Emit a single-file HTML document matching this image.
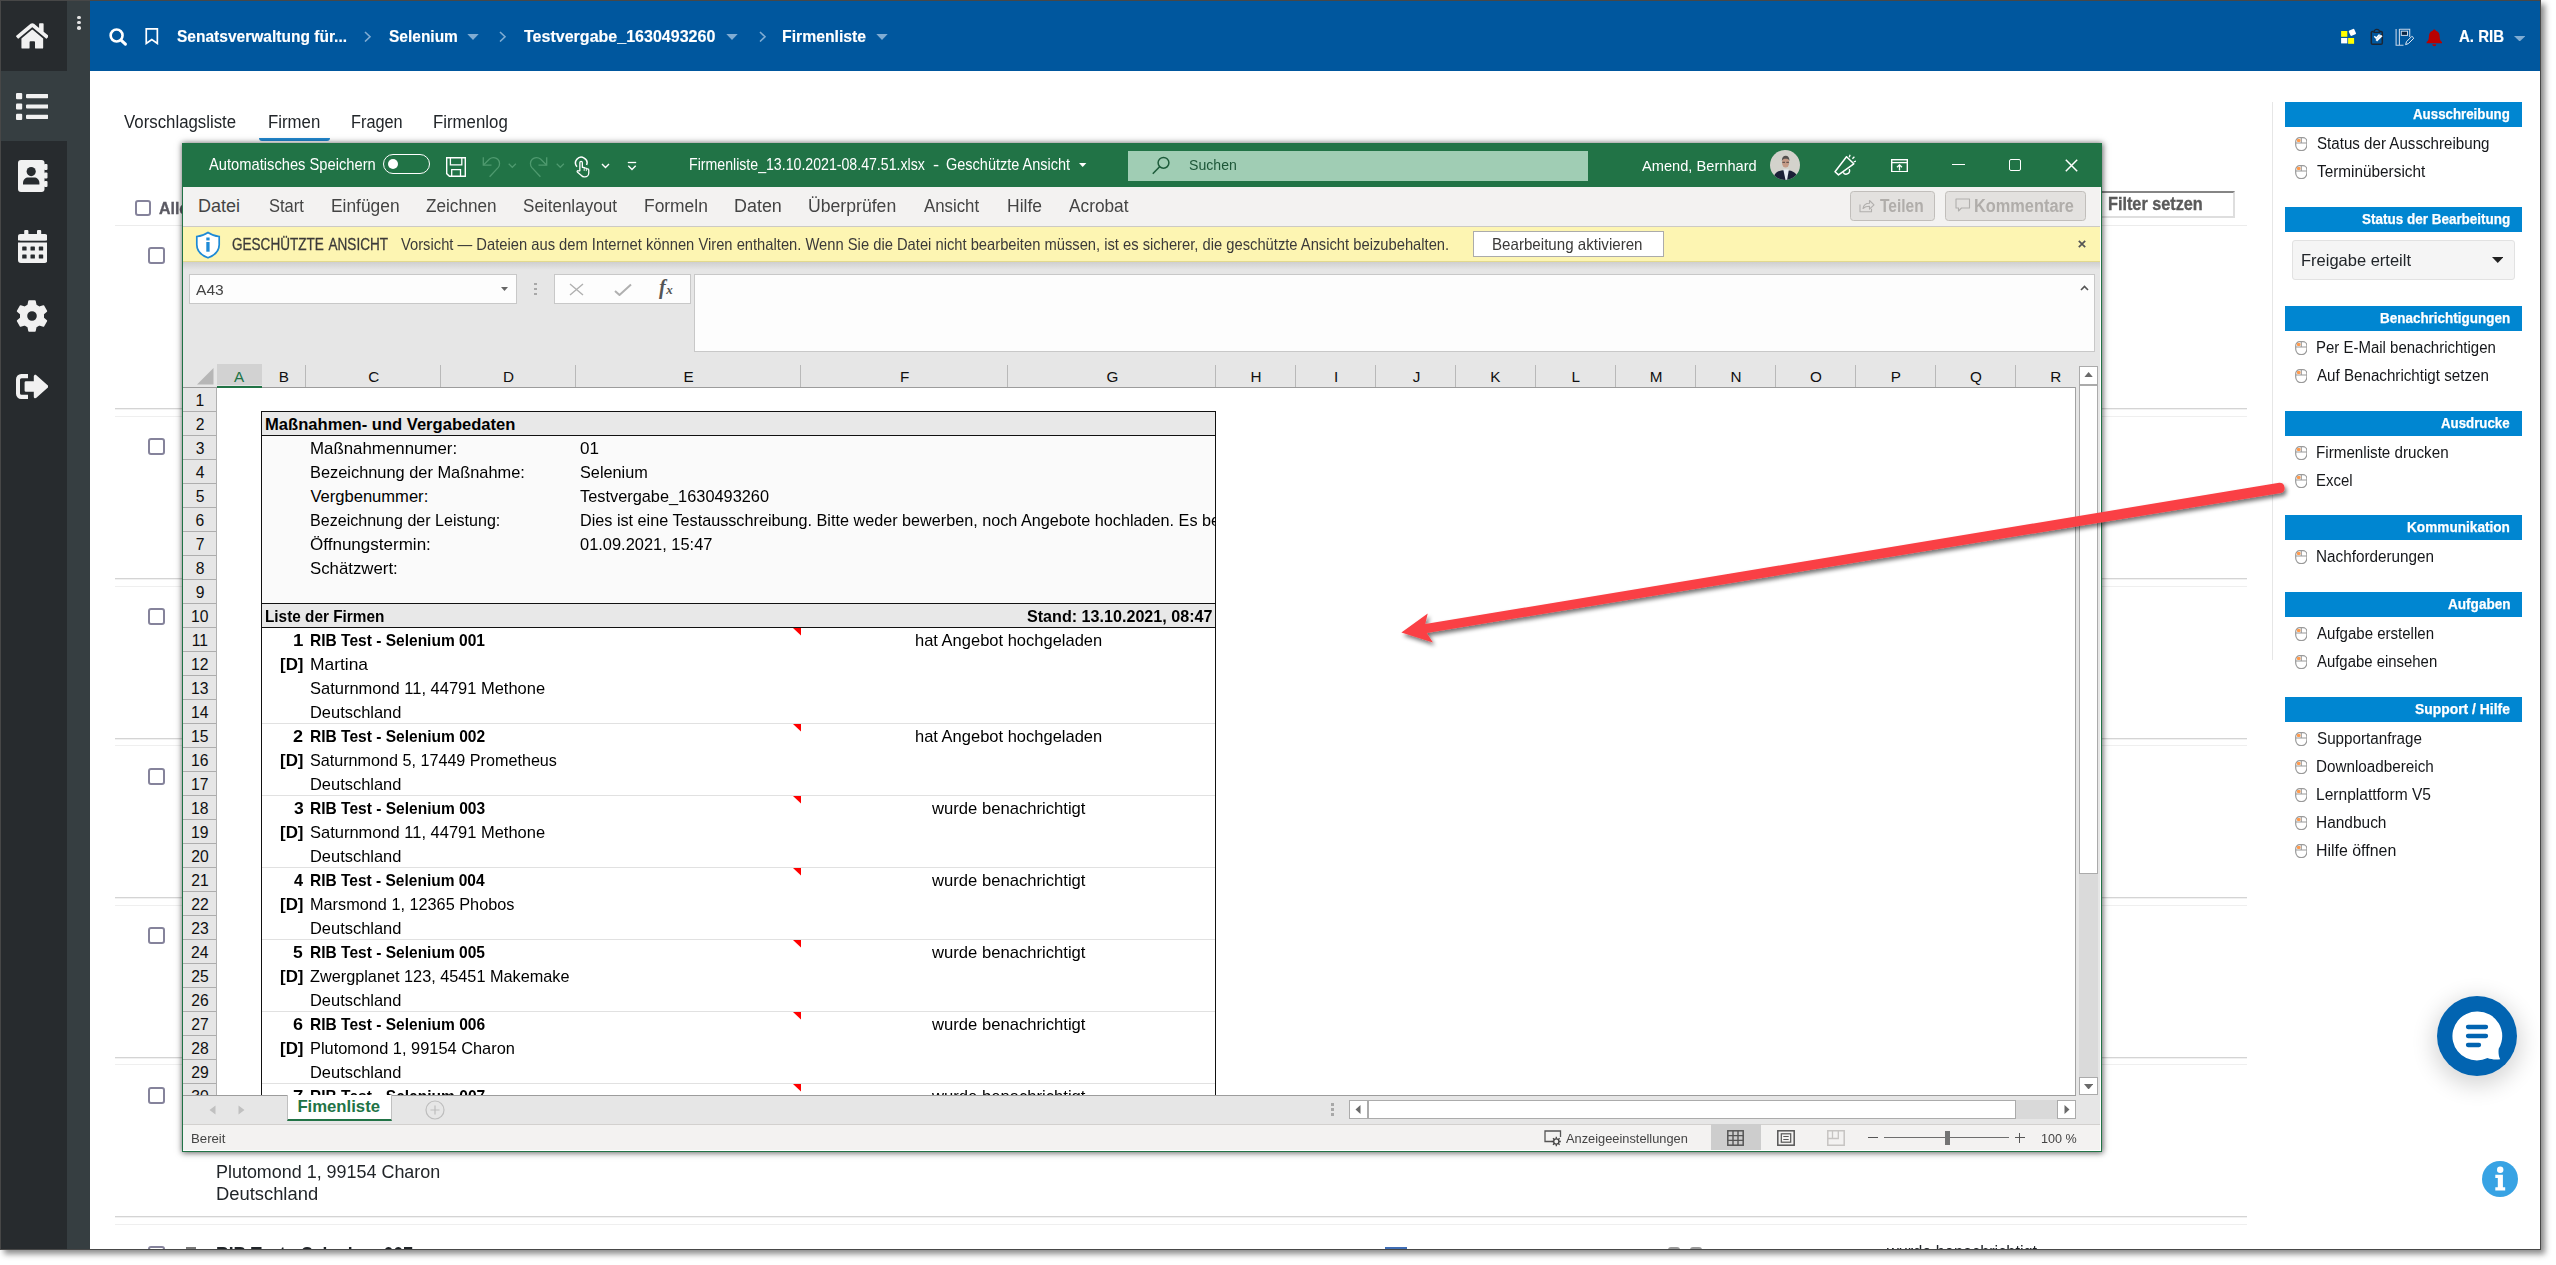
<!DOCTYPE html>
<html lang="de"><head><meta charset="utf-8"><title>Firmenliste</title>
<style>
html,body{margin:0;padding:0;}
body{width:2556px;height:1265px;overflow:hidden;background:#fff;position:relative;font-family:"Liberation Sans",sans-serif;}
#page{position:absolute;left:0;top:0;width:2541px;height:1250px;background:#fff;overflow:hidden;box-shadow:4px 4px 6px rgba(0,0,0,.46);}
#xl{position:absolute;left:182px;top:143px;width:1920px;height:1009px;background:#e6e6e6;overflow:hidden;box-shadow:0 0 6px .5px rgba(0,0,0,.62);}
.a{position:absolute;display:block;}
.t{position:absolute;white-space:nowrap;line-height:1;transform-origin:0 0;display:block;}
i.b{display:inline-block;width:0;height:0;vertical-align:baseline;}

</style></head>
<body>
<div id="page">
<div class="a" style="left:0px;top:0px;width:67px;height:1250px;background:#272b2e;"></div>
<div class="a" style="left:0px;top:71px;width:67px;height:70px;background:#363e41;"></div>
<div class="a" style="left:67px;top:0px;width:23px;height:1250px;background:#363e41;"></div>
<div class="a" style="left:90px;top:0px;width:2451px;height:71px;background:#00579e;"></div>
<svg class="a" style="left:15.8px;top:23.4px;" width="32.6" height="25.8" viewBox="0 30 576 452"><path fill="#f1f1f1" d="M280.37 148.26L96 300.11V464a16 16 0 0 0 16 16l112.06-.29a16 16 0 0 0 15.92-16V368a16 16 0 0 1 16-16h64a16 16 0 0 1 16 16v95.64a16 16 0 0 0 16 16.05L464 480a16 16 0 0 0 16-16V300L295.67 148.26a12.19 12.19 0 0 0-15.3 0zM571.6 251.47L488 182.56V44.05a12 12 0 0 0-12-12h-56a12 12 0 0 0-12 12v72.61L318.47 43a48 48 0 0 0-61 0L4.34 251.47a12 12 0 0 0-1.6 16.9l25.5 31A12 12 0 0 0 45.15 301l235.22-193.74a12.19 12.19 0 0 1 15.3 0L530.9 301a12 12 0 0 0 16.9-1.6l25.5-31a12 12 0 0 0-1.7-16.93z"/></svg>
<div class="a" style="left:77px;top:15.599999999999998px;width:3.6px;height:3.6px;background:#e4e4e4;border-radius:50%;"></div>
<div class="a" style="left:77px;top:20.9px;width:3.6px;height:3.6px;background:#e4e4e4;border-radius:50%;"></div>
<div class="a" style="left:77px;top:26.2px;width:3.6px;height:3.6px;background:#e4e4e4;border-radius:50%;"></div>
<svg class="a" style="left:15.8px;top:92.8px;" width="32.4" height="27" viewBox="0 0 32.4 27"><g fill="#f1f1f1"><rect x="0" y="0" width="6.2" height="6.2" rx="1"/><rect x="0" y="10.4" width="6.2" height="6.2" rx="1"/><rect x="0" y="20.8" width="6.2" height="6.2" rx="1"/><rect x="10" y="1" width="22.4" height="4.2" rx="1"/><rect x="10" y="11.4" width="22.4" height="4.2" rx="1"/><rect x="10" y="21.8" width="22.4" height="4.2" rx="1"/></g></svg>
<svg class="a" style="left:17.6px;top:160px;" width="30" height="32" viewBox="0 0 30 32"><g fill="#f1f1f1"><rect x="0" y="0" width="26.5" height="32" rx="3"/><rect x="26" y="4" width="3.5" height="6" rx="1"/><rect x="26" y="12.5" width="3.5" height="6" rx="1"/><rect x="26" y="21" width="3.5" height="6" rx="1"/></g><g fill="#272b2e"><circle cx="13.2" cy="11.6" r="4.6"/><path d="M5 23.2c0-3.6 2.6-5.6 5.2-5.6h6c2.6 0 5.2 2 5.2 5.6v1.3H5z"/></g></svg>
<svg class="a" style="left:17.6px;top:229.5px;" width="29.4" height="33" viewBox="0 0 29.4 33"><g fill="#f1f1f1"><rect x="0" y="4" width="29.4" height="6.4" rx="2.5"/><rect x="0" y="7" width="29.4" height="3.4"/><rect x="6.2" y="0" width="4.2" height="7" rx="1"/><rect x="19" y="0" width="4.2" height="7" rx="1"/><path d="M0 12.4h29.4v17.6a3 3 0 0 1-3 3H3a3 3 0 0 1-3-3z"/></g><g fill="#272b2e"><rect x="4.2" y="16.4" width="4.4" height="4.2" rx=".6"/><rect x="12.5" y="16.4" width="4.4" height="4.2" rx=".6"/><rect x="20.8" y="16.4" width="4.4" height="4.2" rx=".6"/><rect x="4.2" y="24.4" width="4.4" height="4.2" rx=".6"/><rect x="12.5" y="24.4" width="4.4" height="4.2" rx=".6"/><rect x="20.8" y="24.4" width="4.4" height="4.2" rx=".6"/></g></svg>
<svg class="a" style="left:16px;top:300px;" width="32" height="32" viewBox="0 0 32 32"><path fill="#f1f1f1" fill-rule="evenodd" stroke="#f1f1f1" stroke-width="1.6" stroke-linejoin="round" d="M12.22 5.25 L13.04 1.09 L18.96 1.09 L19.78 5.25 L23.42 7.35 L27.43 5.98 L30.39 11.11 L27.20 13.90 L27.20 18.10 L30.39 20.89 L27.43 26.02 L23.42 24.65 L19.78 26.75 L18.96 30.91 L13.04 30.91 L12.22 26.75 L8.58 24.65 L4.57 26.02 L1.61 20.89 L4.80 18.10 L4.80 13.90 L1.61 11.11 L4.57 5.98 L8.58 7.35Z M10.40 16.00a5.6 5.6 0 1 0 11.2 0a5.6 5.6 0 1 0 -11.2 0Z"/></svg>
<svg class="a" style="left:15.8px;top:373.8px;" width="32.4" height="25" viewBox="0 0 32.4 25"><g fill="#f1f1f1"><path d="M12 0v4.2H5.6a1.6 1.6 0 0 0-1.6 1.6v13.4a1.6 1.6 0 0 0 1.6 1.6H12V25H5.2A5.2 5.2 0 0 1 0 19.8V5.2A5.2 5.2 0 0 1 5.2 0z"/><path d="M20.4 1.2c-1-1-2.6-.3-2.6 1.1v4.9H10a1.4 1.4 0 0 0-1.4 1.4v7.8A1.4 1.4 0 0 0 10 17.8h7.8v4.9c0 1.4 1.6 2.100 2.6 1.1l11.500-10.200c.6-.6.6-1.600 0-2.200z"/></g></svg>
<svg class="a" style="left:108.5px;top:27.5px;" width="19" height="19" viewBox="0 0 19 19"><circle cx="7.600" cy="7.500" r="5.950" fill="none" stroke="#fff" stroke-width="2.600"/><path d="M12.300 12.300l4.100 3.900" stroke="#fff" stroke-width="3.100" stroke-linecap="round"/></svg>
<svg class="a" style="left:144.6px;top:27.9px;" width="14" height="17.5" viewBox="0 0 14 17.5"><path d="M1.250 .850h11.100v14.600L6.800 11.500 1.250 15.450z" fill="none" stroke="#fff" stroke-width="1.700" stroke-linejoin="miter"/></svg>
<span class="t" style="font-size:16.72px;color:#fff;font-weight:700;transform:scaleX(0.9298);left:177.05px;top:29.00px;-webkit-text-stroke:.15px;">Senatsverwaltung für...</span>
<span class="t" style="font-size:16.72px;color:#fff;font-weight:700;transform:scaleX(0.9279);left:388.55px;top:29.00px;-webkit-text-stroke:.15px;">Selenium</span>
<span class="t" style="font-size:16.72px;color:#fff;font-weight:700;transform:scaleX(0.9598);left:524.32px;top:29.00px;-webkit-text-stroke:.15px;">Testvergabe_1630493260</span>
<span class="t" style="font-size:16.72px;color:#fff;font-weight:700;transform:scaleX(0.9436);left:781.94px;top:29.00px;-webkit-text-stroke:.15px;">Firmenliste</span>
<svg class="a" style="left:362.8px;top:30.5px;" width="9" height="11.5" viewBox="0 0 9 11.5"><path d="M2 1l5 4.750L2 10.500" fill="none" stroke="#7facd3" stroke-width="1.6"/></svg>
<svg class="a" style="left:498.0px;top:30.5px;" width="9" height="11.5" viewBox="0 0 9 11.5"><path d="M2 1l5 4.750L2 10.500" fill="none" stroke="#7facd3" stroke-width="1.6"/></svg>
<svg class="a" style="left:758.2px;top:30.5px;" width="9" height="11.5" viewBox="0 0 9 11.5"><path d="M2 1l5 4.750L2 10.500" fill="none" stroke="#7facd3" stroke-width="1.6"/></svg>
<svg class="a" style="left:467px;top:34.3px;" width="12" height="6.2" viewBox="0 0 12 6.2"><path d="M0.3 0h11.400L6 6z" fill="#7facd3"/></svg>
<svg class="a" style="left:725.5px;top:34.3px;" width="12" height="6.2" viewBox="0 0 12 6.2"><path d="M0.3 0h11.400L6 6z" fill="#7facd3"/></svg>
<svg class="a" style="left:875.5px;top:34.3px;" width="12" height="6.2" viewBox="0 0 12 6.2"><path d="M0.3 0h11.400L6 6z" fill="#7facd3"/></svg>
<svg class="a" style="left:2340px;top:28px;" width="18" height="17" viewBox="0 0 18 17"><rect x="1.100" y="3" width="6.200" height="5.800" fill="#ffff00"/><rect x="1.100" y="10" width="6.200" height="5.400" fill="#fff"/><rect x="8.100" y="10" width="6" height="5.800" fill="#ffff00"/><rect x="9.400" y="1.500" width="6" height="5.800" rx="1" fill="#fff" transform="rotate(-24 12.400 4.400)"/></svg>
<svg class="a" style="left:2370px;top:28px;" width="15" height="18" viewBox="0 0 15 18"><path d="M3.700 3.400H2.600a1.300 1.300 0 0 0-1.300 1.300v10.300a1.300 1.300 0 0 0 1.300 1.300h8.400a1.300 1.300 0 0 0 1.300-1.300V4.700a1.300 1.300 0 0 0-1.300-1.300H9.900" fill="none" stroke="#1b2634" stroke-width="1.500"/><path d="M4 4.300c0-2 1.200-2.900 2.800-2.900s2.800.9 2.800 2.900z" fill="none" stroke="#1b2634" stroke-width="1.300"/><path d="M4.300 8.300l1.900 1.900 3.400-3.600" fill="none" stroke="#fff" stroke-width="1.600"/><path d="M6.300 12.800l5.600-5.600" stroke="#fff" stroke-width="2.300"/><path d="M11.300 6.200l1.500 1.500" stroke="#1b2634" stroke-width="1.200"/></svg>
<svg class="a" style="left:2395px;top:28px;" width="19" height="19" viewBox="0 0 19 19"><path d="M1.100 1v16.700M4.400 1v16.700M1.100 17.300h7.400M4.400 1.300h10.300v7.600" fill="none" stroke="#c3d4e6" stroke-width="1.100"/><rect x="6.300" y="3.200" width="6.200" height="4.200" fill="#0b2746" stroke="#c9d9ea" stroke-width="1"/><path d="M10.600 16.600l.9-2.900 5.400-5.400 1.900 1.900-5.400 5.400z" fill="none" stroke="#e3ecf5" stroke-width="1"/></svg>
<svg class="a" style="left:2425.5px;top:28.6px;" width="17" height="18" viewBox="0 0 17 18"><path d="M8.300 0.400c.9 0 1.500.600 1.500 1.400 2.600.700 3.900 2.900 3.900 5.600 0 3.300 1 4.600 2.300 5.700v1.200H.6v-1.200C1.900 12 2.900 10.700 2.900 7.400c0-2.700 1.300-4.900 3.900-5.600 0-.8.600-1.400 1.500-1.400z" fill="#b80000"/><path d="M6.300 15.300h4a2 2 0 0 1-4 0z" fill="#b80000"/></svg>
<span class="t" style="font-size:16.72px;color:#fff;font-weight:700;transform:scaleX(0.8989);left:2459.03px;top:29.00px;-webkit-text-stroke:.15px;">A. RIB</span>
<svg class="a" style="left:2514px;top:35.5px;" width="11.4" height="5.5" viewBox="0 0 11.4 5.5"><path d="M0 0h11.400L5.700 5.500z" fill="#7facd3"/></svg>
<span class="t" style="font-size:18.53px;color:#212529;transform:scaleX(0.9079);left:124.43px;top:113.02px;">Vorschlagsliste</span>
<span class="t" style="font-size:18.53px;color:#212529;transform:scaleX(0.9073);left:267.62px;top:113.02px;">Firmen</span>
<span class="t" style="font-size:18.53px;color:#212529;transform:scaleX(0.8812);left:350.66px;top:113.02px;">Fragen</span>
<span class="t" style="font-size:18.53px;color:#212529;transform:scaleX(0.9081);left:433.12px;top:113.02px;">Firmenlog</span>
<div class="a" style="left:259px;top:138.4px;width:70.5px;height:3px;background:#2186cd;border-radius:0 0 3px 3px;"></div>
<div class="a" style="left:135px;top:200px;width:16px;height:16px;background:#fff;border:2px solid #85839b;border-radius:3px;box-sizing:border-box;"></div>
<span class="t" style="font-size:17.15px;color:#5b5a63;font-weight:700;transform:scaleX(0.9302);left:159.00px;top:200.01px;-webkit-text-stroke:.35px;">Alle</span>
<div class="a" style="left:2080px;top:191px;width:155px;height:27px;background:#fff;box-sizing:border-box;border:2px solid;border-color:#858585 #dedede #dedede #858585;"></div>
<span class="t" style="font-size:17.44px;color:#5a5a5a;font-weight:700;transform:scaleX(0.9316);left:2108.21px;top:196.00px;-webkit-text-stroke:.35px;">Filter setzen</span>
<div class="a" style="left:115px;top:225px;width:2132px;height:1px;background:#ececec;"></div>
<div class="a" style="left:115px;top:408px;width:2132px;height:1px;background:#d4d4d4;"></div>
<div class="a" style="left:115px;top:409px;width:2132px;height:1px;background:#f1f1f1;"></div>
<div class="a" style="left:115px;top:416px;width:2132px;height:1px;background:#efefef;"></div>
<div class="a" style="left:115px;top:578px;width:2132px;height:1px;background:#d4d4d4;"></div>
<div class="a" style="left:115px;top:579px;width:2132px;height:1px;background:#f1f1f1;"></div>
<div class="a" style="left:115px;top:586px;width:2132px;height:1px;background:#efefef;"></div>
<div class="a" style="left:115px;top:738px;width:2132px;height:1px;background:#d4d4d4;"></div>
<div class="a" style="left:115px;top:739px;width:2132px;height:1px;background:#f1f1f1;"></div>
<div class="a" style="left:115px;top:745px;width:2132px;height:1px;background:#efefef;"></div>
<div class="a" style="left:115px;top:897px;width:2132px;height:1px;background:#d4d4d4;"></div>
<div class="a" style="left:115px;top:898px;width:2132px;height:1px;background:#f1f1f1;"></div>
<div class="a" style="left:115px;top:905px;width:2132px;height:1px;background:#efefef;"></div>
<div class="a" style="left:115px;top:1057px;width:2132px;height:1px;background:#d4d4d4;"></div>
<div class="a" style="left:115px;top:1058px;width:2132px;height:1px;background:#f1f1f1;"></div>
<div class="a" style="left:115px;top:1064px;width:2132px;height:1px;background:#efefef;"></div>
<div class="a" style="left:115px;top:1216px;width:2132px;height:1px;background:#d4d4d4;"></div>
<div class="a" style="left:115px;top:1217px;width:2132px;height:1px;background:#f1f1f1;"></div>
<div class="a" style="left:115px;top:1224px;width:2132px;height:1px;background:#efefef;"></div>
<div class="a" style="left:148px;top:247px;width:17px;height:17px;background:#fff;border:2px solid #85839b;border-radius:3px;box-sizing:border-box;"></div>
<div class="a" style="left:148px;top:438.3px;width:17px;height:17px;background:#fff;border:2px solid #85839b;border-radius:3px;box-sizing:border-box;"></div>
<div class="a" style="left:148px;top:608.4px;width:17px;height:17px;background:#fff;border:2px solid #85839b;border-radius:3px;box-sizing:border-box;"></div>
<div class="a" style="left:148px;top:768.2px;width:17px;height:17px;background:#fff;border:2px solid #85839b;border-radius:3px;box-sizing:border-box;"></div>
<div class="a" style="left:148px;top:927.4px;width:17px;height:17px;background:#fff;border:2px solid #85839b;border-radius:3px;box-sizing:border-box;"></div>
<div class="a" style="left:148px;top:1087.2px;width:17px;height:17px;background:#fff;border:2px solid #85839b;border-radius:3px;box-sizing:border-box;"></div>
<div class="a" style="left:148px;top:1246.3px;width:17px;height:17px;background:#fff;border:2px solid #85839b;border-radius:3px;box-sizing:border-box;"></div>
<span class="t" style="font-size:18.9px;color:#212529;transform:scaleX(0.9489);left:215.73px;top:1163.00px;">Plutomond 1, 99154 Charon</span>
<span class="t" style="font-size:18.9px;color:#212529;transform:scaleX(0.9722);left:215.69px;top:1185.00px;">Deutschland</span>
<span class="t" style="font-size:18.9px;color:#212529;font-weight:700;transform:scaleX(0.9256);left:216.03px;top:1245.00px;">RIB Test - Selenium 007</span>
<span class="t" style="font-size:18.9px;color:#212529;transform:scaleX(0.8610);left:1886.62px;top:1243.00px;">wurde benachrichtigt</span>
<div class="a" style="left:186px;top:1247px;width:10px;height:4px;background:#777;"></div>
<div class="a" style="left:1385px;top:1247px;width:22px;height:4px;background:#3f6db5;"></div>
<div class="a" style="left:1668px;top:1247px;width:12px;height:3px;background:#999;border-radius:3px 3px 0 0;"></div>
<div class="a" style="left:1690px;top:1247px;width:12px;height:3px;background:#999;border-radius:3px 3px 0 0;"></div>
<div class="a" style="left:2272px;top:102px;width:1px;height:558px;background:#e6e6e6;"></div>
<div class="a" style="left:2285px;top:102px;width:237px;height:25px;background:#0086d1;"></div>
<span class="t" style="font-size:14.53px;color:#fff;font-weight:700;transform:scaleX(0.9163);left:2413.37px;top:107.01px;-webkit-text-stroke:.25px;">Ausschreibung</span>
<svg class="a" style="left:2294.7px;top:137px;" width="12.6" height="14.4" viewBox="0 0 12.6 14.4"><path d="M0.700 4.700A4 4 0 0 1 4.700 0.700H7.900A4 4 0 0 1 11.900 4.700V8.100A5.600 5.600 0 0 1 0.700 8.100Z" fill="#fff" stroke="#9a9a9a" stroke-width="1.200"/><path d="M0.700 6H11.900M6.300 0.700V6" stroke="#9a9a9a" stroke-width="1.100" fill="none"/><rect x="1.900" y="2" width="3.600" height="3.100" rx="1.100" fill="#ff9a4d"/></svg>
<span class="t" style="font-size:15.84px;color:#15171a;transform:scaleX(0.9561);left:2316.51px;top:136.32px;">Status der Ausschreibung</span>
<svg class="a" style="left:2294.7px;top:165px;" width="12.6" height="14.4" viewBox="0 0 12.6 14.4"><path d="M0.700 4.700A4 4 0 0 1 4.700 0.700H7.900A4 4 0 0 1 11.900 4.700V8.100A5.600 5.600 0 0 1 0.700 8.100Z" fill="#fff" stroke="#9a9a9a" stroke-width="1.200"/><path d="M0.700 6H11.900M6.300 0.700V6" stroke="#9a9a9a" stroke-width="1.100" fill="none"/><rect x="1.900" y="2" width="3.600" height="3.100" rx="1.100" fill="#ff9a4d"/></svg>
<span class="t" style="font-size:15.84px;color:#15171a;transform:scaleX(0.9690);left:2316.86px;top:164.32px;">Terminübersicht</span>
<div class="a" style="left:2285px;top:207px;width:237px;height:25px;background:#0086d1;"></div>
<span class="t" style="font-size:14.53px;color:#fff;font-weight:700;transform:scaleX(0.9285);left:2361.91px;top:212.01px;-webkit-text-stroke:.25px;">Status der Bearbeitung</span>
<div class="a" style="left:2292px;top:240px;width:223px;height:39.5px;background:#f5f5f5;box-sizing:border-box;border:1px solid #e2e2e2;border-radius:3px;"></div>
<span class="t" style="font-size:16.72px;color:#212529;transform:scaleX(0.9870);left:2300.85px;top:253.00px;">Freigabe erteilt</span>
<svg class="a" style="left:2491.5px;top:257.3px;" width="11.5" height="6" viewBox="0 0 11.5 6"><path d="M0 0h11.500L5.750 6z" fill="#222"/></svg>
<div class="a" style="left:2285px;top:306px;width:237px;height:25px;background:#0086d1;"></div>
<span class="t" style="font-size:14.53px;color:#fff;font-weight:700;transform:scaleX(0.9273);left:2380.00px;top:311.01px;-webkit-text-stroke:.25px;">Benachrichtigungen</span>
<svg class="a" style="left:2294.7px;top:341px;" width="12.6" height="14.4" viewBox="0 0 12.6 14.4"><path d="M0.700 4.700A4 4 0 0 1 4.700 0.700H7.900A4 4 0 0 1 11.900 4.700V8.100A5.600 5.600 0 0 1 0.700 8.100Z" fill="#fff" stroke="#9a9a9a" stroke-width="1.200"/><path d="M0.700 6H11.900M6.300 0.700V6" stroke="#9a9a9a" stroke-width="1.100" fill="none"/><rect x="1.900" y="2" width="3.600" height="3.100" rx="1.100" fill="#ff9a4d"/></svg>
<span class="t" style="font-size:15.84px;color:#15171a;transform:scaleX(0.9462);left:2315.97px;top:340.32px;">Per E-Mail benachrichtigen</span>
<svg class="a" style="left:2294.7px;top:369px;" width="12.6" height="14.4" viewBox="0 0 12.6 14.4"><path d="M0.700 4.700A4 4 0 0 1 4.700 0.700H7.900A4 4 0 0 1 11.900 4.700V8.100A5.600 5.600 0 0 1 0.700 8.100Z" fill="#fff" stroke="#9a9a9a" stroke-width="1.200"/><path d="M0.700 6H11.900M6.300 0.700V6" stroke="#9a9a9a" stroke-width="1.100" fill="none"/><rect x="1.900" y="2" width="3.600" height="3.100" rx="1.100" fill="#ff9a4d"/></svg>
<span class="t" style="font-size:15.84px;color:#15171a;transform:scaleX(0.9572);left:2317.17px;top:368.32px;">Auf Benachrichtigt setzen</span>
<div class="a" style="left:2285px;top:411px;width:237px;height:25px;background:#0086d1;"></div>
<span class="t" style="font-size:14.53px;color:#fff;font-weight:700;transform:scaleX(0.9141);left:2441.17px;top:416.01px;-webkit-text-stroke:.25px;">Ausdrucke</span>
<svg class="a" style="left:2294.7px;top:446px;" width="12.6" height="14.4" viewBox="0 0 12.6 14.4"><path d="M0.700 4.700A4 4 0 0 1 4.700 0.700H7.900A4 4 0 0 1 11.900 4.700V8.100A5.600 5.600 0 0 1 0.700 8.100Z" fill="#fff" stroke="#9a9a9a" stroke-width="1.200"/><path d="M0.700 6H11.900M6.300 0.700V6" stroke="#9a9a9a" stroke-width="1.100" fill="none"/><rect x="1.900" y="2" width="3.600" height="3.100" rx="1.100" fill="#ff9a4d"/></svg>
<span class="t" style="font-size:15.84px;color:#15171a;transform:scaleX(0.9604);left:2315.95px;top:445.32px;">Firmenliste drucken</span>
<svg class="a" style="left:2294.7px;top:474px;" width="12.6" height="14.4" viewBox="0 0 12.6 14.4"><path d="M0.700 4.700A4 4 0 0 1 4.700 0.700H7.900A4 4 0 0 1 11.900 4.700V8.100A5.600 5.600 0 0 1 0.700 8.100Z" fill="#fff" stroke="#9a9a9a" stroke-width="1.200"/><path d="M0.700 6H11.900M6.300 0.700V6" stroke="#9a9a9a" stroke-width="1.100" fill="none"/><rect x="1.900" y="2" width="3.600" height="3.100" rx="1.100" fill="#ff9a4d"/></svg>
<span class="t" style="font-size:15.84px;color:#15171a;transform:scaleX(0.9434);left:2315.97px;top:473.32px;">Excel</span>
<div class="a" style="left:2285px;top:515px;width:237px;height:25px;background:#0086d1;"></div>
<span class="t" style="font-size:14.53px;color:#fff;font-weight:700;transform:scaleX(0.9386);left:2407.19px;top:520.01px;-webkit-text-stroke:.25px;">Kommunikation</span>
<svg class="a" style="left:2294.7px;top:550px;" width="12.6" height="14.4" viewBox="0 0 12.6 14.4"><path d="M0.700 4.700A4 4 0 0 1 4.700 0.700H7.900A4 4 0 0 1 11.900 4.700V8.100A5.600 5.600 0 0 1 0.700 8.100Z" fill="#fff" stroke="#9a9a9a" stroke-width="1.200"/><path d="M0.700 6H11.900M6.300 0.700V6" stroke="#9a9a9a" stroke-width="1.100" fill="none"/><rect x="1.900" y="2" width="3.600" height="3.100" rx="1.100" fill="#ff9a4d"/></svg>
<span class="t" style="font-size:15.84px;color:#15171a;transform:scaleX(0.9650);left:2315.95px;top:549.32px;">Nachforderungen</span>
<div class="a" style="left:2285px;top:592px;width:237px;height:25px;background:#0086d1;"></div>
<span class="t" style="font-size:14.53px;color:#fff;font-weight:700;transform:scaleX(0.9349);left:2447.56px;top:597.01px;-webkit-text-stroke:.25px;">Aufgaben</span>
<svg class="a" style="left:2294.7px;top:627px;" width="12.6" height="14.4" viewBox="0 0 12.6 14.4"><path d="M0.700 4.700A4 4 0 0 1 4.700 0.700H7.900A4 4 0 0 1 11.900 4.700V8.100A5.600 5.600 0 0 1 0.700 8.100Z" fill="#fff" stroke="#9a9a9a" stroke-width="1.200"/><path d="M0.700 6H11.900M6.300 0.700V6" stroke="#9a9a9a" stroke-width="1.100" fill="none"/><rect x="1.900" y="2" width="3.600" height="3.100" rx="1.100" fill="#ff9a4d"/></svg>
<span class="t" style="font-size:15.84px;color:#15171a;transform:scaleX(0.9497);left:2317.17px;top:626.32px;">Aufgabe erstellen</span>
<svg class="a" style="left:2294.7px;top:655px;" width="12.6" height="14.4" viewBox="0 0 12.6 14.4"><path d="M0.700 4.700A4 4 0 0 1 4.700 0.700H7.900A4 4 0 0 1 11.900 4.700V8.100A5.600 5.600 0 0 1 0.700 8.100Z" fill="#fff" stroke="#9a9a9a" stroke-width="1.200"/><path d="M0.700 6H11.900M6.300 0.700V6" stroke="#9a9a9a" stroke-width="1.100" fill="none"/><rect x="1.900" y="2" width="3.600" height="3.100" rx="1.100" fill="#ff9a4d"/></svg>
<span class="t" style="font-size:15.84px;color:#15171a;transform:scaleX(0.9418);left:2317.17px;top:654.32px;">Aufgabe einsehen</span>
<div class="a" style="left:2285px;top:697px;width:237px;height:25px;background:#0086d1;"></div>
<span class="t" style="font-size:14.53px;color:#fff;font-weight:700;transform:scaleX(0.9565);left:2414.90px;top:702.01px;-webkit-text-stroke:.25px;">Support / Hilfe</span>
<svg class="a" style="left:2294.7px;top:732px;" width="12.6" height="14.4" viewBox="0 0 12.6 14.4"><path d="M0.700 4.700A4 4 0 0 1 4.700 0.700H7.900A4 4 0 0 1 11.900 4.700V8.100A5.600 5.600 0 0 1 0.700 8.100Z" fill="#fff" stroke="#9a9a9a" stroke-width="1.200"/><path d="M0.700 6H11.900M6.300 0.700V6" stroke="#9a9a9a" stroke-width="1.100" fill="none"/><rect x="1.900" y="2" width="3.600" height="3.100" rx="1.100" fill="#ff9a4d"/></svg>
<span class="t" style="font-size:15.84px;color:#15171a;transform:scaleX(0.9619);left:2316.51px;top:731.32px;">Supportanfrage</span>
<svg class="a" style="left:2294.7px;top:760px;" width="12.6" height="14.4" viewBox="0 0 12.6 14.4"><path d="M0.700 4.700A4 4 0 0 1 4.700 0.700H7.900A4 4 0 0 1 11.900 4.700V8.100A5.600 5.600 0 0 1 0.700 8.100Z" fill="#fff" stroke="#9a9a9a" stroke-width="1.200"/><path d="M0.700 6H11.900M6.300 0.700V6" stroke="#9a9a9a" stroke-width="1.100" fill="none"/><rect x="1.900" y="2" width="3.600" height="3.100" rx="1.100" fill="#ff9a4d"/></svg>
<span class="t" style="font-size:15.84px;color:#15171a;transform:scaleX(0.9626);left:2315.95px;top:759.32px;">Downloadbereich</span>
<svg class="a" style="left:2294.7px;top:788px;" width="12.6" height="14.4" viewBox="0 0 12.6 14.4"><path d="M0.700 4.700A4 4 0 0 1 4.700 0.700H7.900A4 4 0 0 1 11.900 4.700V8.100A5.600 5.600 0 0 1 0.700 8.100Z" fill="#fff" stroke="#9a9a9a" stroke-width="1.200"/><path d="M0.700 6H11.900M6.300 0.700V6" stroke="#9a9a9a" stroke-width="1.100" fill="none"/><rect x="1.900" y="2" width="3.600" height="3.100" rx="1.100" fill="#ff9a4d"/></svg>
<span class="t" style="font-size:15.84px;color:#15171a;transform:scaleX(0.9830);left:2315.92px;top:787.32px;">Lernplattform V5</span>
<svg class="a" style="left:2294.7px;top:816px;" width="12.6" height="14.4" viewBox="0 0 12.6 14.4"><path d="M0.700 4.700A4 4 0 0 1 4.700 0.700H7.900A4 4 0 0 1 11.900 4.700V8.100A5.600 5.600 0 0 1 0.700 8.100Z" fill="#fff" stroke="#9a9a9a" stroke-width="1.200"/><path d="M0.700 6H11.900M6.300 0.700V6" stroke="#9a9a9a" stroke-width="1.100" fill="none"/><rect x="1.900" y="2" width="3.600" height="3.100" rx="1.100" fill="#ff9a4d"/></svg>
<span class="t" style="font-size:15.84px;color:#15171a;transform:scaleX(0.9765);left:2315.93px;top:815.32px;">Handbuch</span>
<svg class="a" style="left:2294.7px;top:844px;" width="12.6" height="14.4" viewBox="0 0 12.6 14.4"><path d="M0.700 4.700A4 4 0 0 1 4.700 0.700H7.900A4 4 0 0 1 11.900 4.700V8.100A5.600 5.600 0 0 1 0.700 8.100Z" fill="#fff" stroke="#9a9a9a" stroke-width="1.200"/><path d="M0.700 6H11.900M6.300 0.700V6" stroke="#9a9a9a" stroke-width="1.100" fill="none"/><rect x="1.900" y="2" width="3.600" height="3.100" rx="1.100" fill="#ff9a4d"/></svg>
<span class="t" style="font-size:15.84px;color:#15171a;transform:scaleX(1.0056);left:2315.89px;top:843.32px;">Hilfe öffnen</span>
<div class="a" style="left:2437px;top:996px;width:80px;height:80px;background:#0264b1;border-radius:50%;box-shadow:0 6px 22px 4px rgba(0,0,0,.16);"></div>
<svg class="a" style="left:2437px;top:996px;" width="80" height="80" viewBox="0 0 80 80"><path d="M40 15.500a24.500 24.500 0 1 0 10.500 46.600c3.500 1.400 8 1.800 12.700 1.200-1.700-3.200-2-7.400-1.400-10.800A24.500 24.500 0 0 0 40 15.500z" fill="#fff"/><g stroke="#0264b1" stroke-width="4.300" stroke-linecap="round"><path d="M31 31h18M31 40h18M31 49h11"/></g></svg>
<div class="a" style="left:2481.9px;top:1160.7px;width:36px;height:36px;background:#38a3e4;border-radius:50%;"></div>
<svg class="a" style="left:2481.9px;top:1160.7px;" width="36" height="36" viewBox="0 0 36 36"><circle cx="18.200" cy="8.800" r="3.200" fill="#fff"/><path d="M13.300 13.800h7.600v12.400h2.300v3.300H13.300v-3.300h2.500v-9.100h-2.500z" fill="#fff"/></svg>
<div id="xl">
<div class="a" style="left:0px;top:0px;width:1920px;height:44px;background:#217346;"></div>
<span class="t" style="font-size:15.99px;color:#fff;transform:scaleX(0.9201);left:26.77px;top:14.01px;">Automatisches Speichern</span>
<div class="a" style="left:200.8px;top:11px;width:47.2px;height:20px;box-sizing:border-box;border:1.600px solid #fff;border-radius:10px;"></div>
<div class="a" style="left:205.8px;top:16.099999999999994px;width:10.2px;height:10.2px;background:#fff;border-radius:50%;"></div>
<svg class="a" style="left:264px;top:14px;" width="20" height="20" viewBox="0 0 20 20"><path d="M.700 .700H19.300V19.300H3.400L.700 16.600Z" fill="none" stroke="#fff" stroke-width="1.400" stroke-linejoin="miter"/><path d="M4.400 .700V7.800H15.800V.700" fill="none" stroke="#fff" stroke-width="1.300"/><path d="M5.700 19.300V12.700H14.500V19.300" fill="none" stroke="#fff" stroke-width="1.300"/></svg>
<svg class="a" style="left:298.5px;top:13px;" width="20" height="22" viewBox="0 0 20 22"><path d="M2.300 1.200V9.200H10.500" fill="none" stroke="#4f9a6f" stroke-width="1.300"/><path d="M2.500 9L8.500 3A6.100 6.100 0 0 1 17.100 11.600L8.600 20.800" fill="none" stroke="#4f9a6f" stroke-width="1.300"/></svg>
<svg class="a" style="left:326px;top:20px;" width="9" height="5.5" viewBox="0 0 9 5.5"><path d="M.700 .800l3.600 3.500L7.900 .800" fill="none" stroke="#4f9a6f" stroke-width="1.200"/></svg>
<svg class="a" style="left:347.4px;top:13px;" width="20" height="22" viewBox="0 0 20 22"><path d="M17.700 1.200V9.200H9.500" fill="none" stroke="#4f9a6f" stroke-width="1.300"/><path d="M17.500 9L11.500 3A6.100 6.100 0 0 0 2.900 11.600L11.400 20.800" fill="none" stroke="#4f9a6f" stroke-width="1.300"/></svg>
<svg class="a" style="left:374.20000000000005px;top:20.19999999999999px;" width="9" height="5.5" viewBox="0 0 9 5.5"><path d="M.700 .800l3.600 3.500L7.900 .800" fill="none" stroke="#4f9a6f" stroke-width="1.200"/></svg>
<svg class="a" style="left:392px;top:13px;" width="17" height="22" viewBox="0 0 17 22"><path d="M3 10.700A5.700 5.700 0 1 1 12.600 9" fill="none" stroke="#fff" stroke-width="1.500"/><path d="M5.850 14.800V6.700a1.250 1.250 0 0 1 2.500 0V11.300l1.500.200c.5 0 .8.300.9.600l1.200.100c.5 0 .8.300.9.600l.9.100c.6.100 1 .600 1 1.200V17c0 2.200-1.700 3.900-3.900 3.900H10.300c-1.200 0-2.200-.5-2.900-1.400L3.300 15.900c-.5-.7.300-1.600 1-1.100z" fill="#217346" stroke="#fff" stroke-width="1.300" stroke-linejoin="round"/><path d="M10.200 12.300v2.600M12.300 12.800v2.300" stroke="#fff" stroke-width=".9"/></svg>
<svg class="a" style="left:418.5px;top:19.5px;" width="9" height="6" viewBox="0 0 9 6"><path d="M1 1l3.500 3.500L8 1" fill="none" stroke="#fff" stroke-width="1.400"/></svg>
<svg class="a" style="left:444.5px;top:17.5px;" width="10" height="10" viewBox="0 0 10 10"><path d="M.8 1.500h8.400" stroke="#fff" stroke-width="1.300"/><path d="M1.300 4.800l3.700 3.700 3.700-3.700" fill="none" stroke="#fff" stroke-width="1.400"/></svg>
<span class="t" style="font-size:15.99px;color:#fff;transform:scaleX(0.8846);left:506.84px;top:14.01px;">Firmenliste_13.10.2021-08.47.51.xlsx</span>
<span class="t" style="font-size:15.99px;color:#fff;transform:scaleX(1.1517);left:750.68px;top:14.01px;">-</span>
<span class="t" style="font-size:15.99px;color:#fff;transform:scaleX(0.9065);left:764.07px;top:14.01px;">Geschützte Ansicht</span>
<svg class="a" style="left:897.3px;top:20px;" width="7.4" height="4" viewBox="0 0 7.4 4"><path d="M0 0h7.400L3.700 4z" fill="#fff"/></svg>
<div class="a" style="left:946.3px;top:7.5px;width:460.2px;height:30px;background:#a0cdb4;"></div>
<svg class="a" style="left:970px;top:12.5px;" width="19" height="19" viewBox="0 0 19 19"><circle cx="11.500" cy="6.800" r="5.400" fill="none" stroke="#1e5c3b" stroke-width="1.500"/><path d="M7.600 10.800L.8 17.800" stroke="#1e5c3b" stroke-width="1.600"/></svg>
<span class="t" style="font-size:15.26px;color:#1d5738;transform:scaleX(0.9251);left:1006.86px;top:14.00px;">Suchen</span>
<span class="t" style="font-size:15.55px;color:#fff;transform:scaleX(0.9410);left:1459.77px;top:14.60px;">Amend, Bernhard</span>
<svg class="a" style="left:1588px;top:7px;" width="30" height="30" viewBox="0 0 30 30"><defs><clipPath id="av"><circle cx="15" cy="15" r="15"/></clipPath></defs><g clip-path="url(#av)"><rect width="30" height="30" fill="#d3d2cc"/><path d="M3.500 30c0-6.500 3.500-9.800 12-9.800S27.500 23.500 27.500 30z" fill="#1b2037"/><path d="M13.300 19.500l2.200 10.500h1.600l1.800-10.500z" fill="#e6ebf3"/><ellipse cx="15.600" cy="12.600" rx="3.600" ry="5" fill="#c49a86"/><path d="M11.800 11.200c0-3.600 1.600-5.400 3.900-5.400s3.800 1.700 3.800 5.200c-.8-1.800-1.700-2.300-3.800-2.300s-3.100.6-3.900 2.500z" fill="#55504f"/><path d="M12.400 12.300h2.600M16.300 12.300h2.600" stroke="#40383a" stroke-width=".9"/></g></svg>
<svg class="a" style="left:1650.5px;top:11px;" width="23" height="22" viewBox="0 0 23 22"><path d="M2 17.800L13.500 2.700l7.300 7.100L5.500 20.900z" fill="none" stroke="#fff" stroke-width="1.500" stroke-linejoin="round"/><path d="M10.200 18.300a3.300 3.300 0 0 0 6-3.200" fill="none" stroke="#fff" stroke-width="1.400"/><path d="M16.300 3.200l.8-2.400M19.400 4.800l2-2M20.800 7.800l2.200-.6" stroke="#fff" stroke-width="1.300"/></svg>
<svg class="a" style="left:1709px;top:15.5px;" width="17" height="13.5" viewBox="0 0 17 13.5"><rect x=".7" y=".7" width="15.600" height="12" fill="none" stroke="#fff" stroke-width="1.400"/><path d="M.7 3.600h15.600" stroke="#fff" stroke-width="1.300"/><path d="M8.500 11.500v-5.500M6 8.300l2.500-2.500L11 8.300" fill="none" stroke="#fff" stroke-width="1.300"/></svg>
<div class="a" style="left:1769.5px;top:20.69999999999999px;width:13px;height:1.4px;background:#fff;"></div>
<div class="a" style="left:1826.7px;top:16.19999999999999px;width:12.3px;height:11.8px;box-sizing:border-box;border:1.500px solid #fff;border-radius:2px;"></div>
<svg class="a" style="left:1883px;top:15.800000000000011px;" width="13" height="13" viewBox="0 0 13 13"><path d="M.8.800l11.400 11.400M12.200.8L.8 12.200" stroke="#fff" stroke-width="1.500"/></svg>
<div class="a" style="left:0px;top:44px;width:1920px;height:39px;background:#f3f2f1;"></div>
<span class="t" style="font-size:18.02px;color:#444;left:16.02px;top:54.00px;">Datei</span>
<span class="t" style="font-size:18.02px;color:#444;transform:scaleX(0.9165);left:86.55px;top:54.00px;">Start</span>
<span class="t" style="font-size:18.02px;color:#444;transform:scaleX(0.9638);left:148.58px;top:54.00px;">Einfügen</span>
<span class="t" style="font-size:18.02px;color:#444;transform:scaleX(0.9533);left:244.25px;top:54.00px;">Zeichnen</span>
<span class="t" style="font-size:18.02px;color:#444;transform:scaleX(0.9468);left:341.03px;top:54.00px;">Seitenlayout</span>
<span class="t" style="font-size:18.02px;color:#444;transform:scaleX(0.9664);left:462.07px;top:54.00px;">Formeln</span>
<span class="t" style="font-size:18.02px;color:#444;transform:scaleX(0.9949);left:552.33px;top:54.00px;">Daten</span>
<span class="t" style="font-size:18.02px;color:#444;transform:scaleX(0.9785);left:625.94px;top:54.00px;">Überprüfen</span>
<span class="t" style="font-size:18.02px;color:#444;transform:scaleX(0.9334);left:741.77px;top:54.00px;">Ansicht</span>
<span class="t" style="font-size:18.02px;color:#444;transform:scaleX(0.9713);left:824.56px;top:54.00px;">Hilfe</span>
<span class="t" style="font-size:18.02px;color:#444;transform:scaleX(0.9576);left:887.47px;top:54.00px;">Acrobat</span>
<div class="a" style="left:1668px;top:48px;width:84.5px;height:29.7px;background:#e3e1df;box-sizing:border-box;border:1px solid #c1bebb;border-radius:3.500px;"></div>
<svg class="a" style="left:1677px;top:54.5px;" width="16" height="15" viewBox="0 0 16 15"><path d="M1 6.500v7.300h11.500v-3M4 10.500c.5-3.500 3-5.200 6.500-5.200V2.500L15 6.800l-4.500 4.300V8.300C8 8.300 5.800 8.800 4 10.500z" fill="none" stroke="#b1afad" stroke-width="1.100" stroke-linejoin="round"/></svg>
<span class="t" style="font-size:17.44px;color:#b0adaa;font-weight:700;transform:scaleX(0.8885);left:1697.83px;top:55.00px;">Teilen</span>
<div class="a" style="left:1763px;top:48px;width:141px;height:29.7px;background:#e3e1df;box-sizing:border-box;border:1px solid #c1bebb;border-radius:3.500px;"></div>
<svg class="a" style="left:1772.5px;top:54.5px;" width="16" height="15" viewBox="0 0 16 15"><path d="M1 1h13.500v9H6.500L3.500 13v-3H1z" fill="none" stroke="#b1afad" stroke-width="1.100" stroke-linejoin="round"/></svg>
<span class="t" style="font-size:17.44px;color:#b0adaa;font-weight:700;transform:scaleX(0.9377);left:1791.91px;top:55.00px;">Kommentare</span>
<div class="a" style="left:0px;top:119px;width:1920px;height:8px;background:linear-gradient(#cfcfcf,#e6e6e6);"></div>
<div class="a" style="left:0px;top:83px;width:1920px;height:36px;background:#fdf5b2;box-sizing:border-box;border-top:1px solid #cccac4;border-bottom:1px solid #e2d98e;"></div>
<svg class="a" style="left:13px;top:87.5px;" width="26" height="28" viewBox="0 0 26 28"><path d="M13 1.500C9.500 4 5.500 5.200 1.800 5.500v8.300c0 6 4.500 10.500 11.200 13 6.700-2.500 11.200-7 11.200-13V5.500C20.500 5.200 16.500 4 13 1.500z" fill="#fff" stroke="#1e8ad6" stroke-width="1.700"/><rect x="11.300" y="6.500" width="3.300" height="2.900" fill="#1e8ad6"/><rect x="11.300" y="11" width="3.300" height="9.700" fill="#1e8ad6"/></svg>
<span class="t" style="font-size:16.28px;color:#3b3a39;transform:scaleX(0.8330);left:50.32px;top:93.00px;-webkit-text-stroke:.3px;word-spacing:2px;">GESCHÜTZTE ANSICHT</span>
<span class="t" style="font-size:16.28px;color:#3b3a39;transform:scaleX(0.9061);left:218.74px;top:93.00px;">Vorsicht — Dateien aus dem Internet können Viren enthalten. Wenn Sie die Datei nicht bearbeiten müssen, ist es sicherer, die geschützte Ansicht beizubehalten.</span>
<div class="a" style="left:1291px;top:88px;width:190.5px;height:25.5px;background:#fff;box-sizing:border-box;border:1px solid #ababab;"></div>
<span class="t" style="font-size:16.28px;color:#3b3a39;transform:scaleX(0.9300);left:1309.76px;top:93.00px;">Bearbeitung aktivieren</span>
<svg class="a" style="left:1895.5px;top:97px;" width="8" height="8" viewBox="0 0 8 8"><path d="M.8.800l6.400 6.400M7.200.8L.8 7.200" stroke="#555" stroke-width="1.700"/></svg>
<div class="a" style="left:7px;top:131px;width:328px;height:29.5px;background:#fdfdfd;box-sizing:border-box;border:1px solid #c8c8c8;"></div>
<span class="t" style="font-size:15.26px;color:#444;transform:scaleX(1.0212);left:14.27px;top:139.00px;">A43</span>
<svg class="a" style="left:319.2px;top:144px;" width="7" height="4" viewBox="0 0 7 4"><path d="M0 0h7L3.500 4z" fill="#666"/></svg>
<div class="a" style="left:352.29999999999995px;top:140px;width:2.4px;height:2.4px;background:#a8a8a8;"></div>
<div class="a" style="left:352.29999999999995px;top:144.8px;width:2.4px;height:2.4px;background:#a8a8a8;"></div>
<div class="a" style="left:352.29999999999995px;top:149.60000000000002px;width:2.4px;height:2.4px;background:#a8a8a8;"></div>
<div class="a" style="left:372px;top:131px;width:137px;height:29.5px;background:#fdfdfd;box-sizing:border-box;border:1px solid #c8c8c8;"></div>
<svg class="a" style="left:387px;top:139.5px;" width="15" height="13" viewBox="0 0 15 13"><path d="M1 1l13 11M14 1L1 12" stroke="#b0b0b0" stroke-width="1.400"/></svg>
<svg class="a" style="left:431.5px;top:139.5px;" width="18" height="13" viewBox="0 0 18 13"><path d="M1 8l4.500 4L17 1.500" fill="none" stroke="#b0b0b0" stroke-width="2"/></svg>
<span class="t" style="font-size:20px;color:#555;font-weight:700;font-style:italic;font-family:'Liberation Serif',serif;left:477.00px;top:134.01px;">f</span>
<span class="t" style="font-size:13px;color:#555;font-weight:700;font-style:italic;font-family:'Liberation Serif',serif;left:484.16px;top:140.00px;">x</span>
<div class="a" style="left:512px;top:131px;width:1400.5px;height:77.5px;background:#fdfdfd;box-sizing:border-box;border:1px solid #c8c8c8;"></div>
<svg class="a" style="left:1897.5px;top:141.5px;" width="9" height="6" viewBox="0 0 9 6"><path d="M1 5l3.500-3.500L8 5" fill="none" stroke="#555" stroke-width="1.600"/></svg>
<div class="a" style="left:34.5px;top:245px;width:1859px;height:707px;background:#fff;"></div>
<div class="a" style="left:1px;top:244px;width:1893px;height:1px;background:#9c9c9c;"></div>
<svg class="a" style="left:15px;top:225px;" width="16.5" height="16.5" viewBox="0 0 16.5 16.5"><path d="M16.500 0v16.500H0z" fill="#b6b6b6"/></svg>
<div class="a" style="left:34.5px;top:221.3px;width:45.5px;height:21px;background:#d2d2d2;"></div>
<div class="a" style="left:34.5px;top:243px;width:45.5px;height:2px;background:#217346;"></div>
<span class="t" style="font-size:15.26px;color:#217346;left:51.91px;top:226.00px;">A</span>
<span class="t" style="font-size:15.26px;color:#101010;left:96.69px;top:226.00px;">B</span>
<div class="a" style="left:123.0px;top:221.5px;width:1px;height:22.5px;background:#b9b9b9;"></div>
<span class="t" style="font-size:15.26px;color:#101010;left:186.30px;top:226.00px;">C</span>
<div class="a" style="left:257.8px;top:221.5px;width:1px;height:22.5px;background:#b9b9b9;"></div>
<span class="t" style="font-size:15.26px;color:#101010;left:321.03px;top:226.00px;">D</span>
<div class="a" style="left:392.79999999999995px;top:221.5px;width:1px;height:22.5px;background:#b9b9b9;"></div>
<span class="t" style="font-size:15.26px;color:#101010;left:501.42px;top:226.00px;">E</span>
<div class="a" style="left:617.8px;top:221.5px;width:1px;height:22.5px;background:#b9b9b9;"></div>
<span class="t" style="font-size:15.26px;color:#101010;left:717.92px;top:226.00px;">F</span>
<div class="a" style="left:825.0px;top:221.5px;width:1px;height:22.5px;background:#b9b9b9;"></div>
<span class="t" style="font-size:15.26px;color:#101010;left:924.50px;top:226.00px;">G</span>
<div class="a" style="left:1032.5px;top:221.5px;width:1px;height:22.5px;background:#b9b9b9;"></div>
<span class="t" style="font-size:15.26px;color:#101010;left:1068.49px;top:226.00px;">H</span>
<div class="a" style="left:1112.5px;top:221.5px;width:1px;height:22.5px;background:#b9b9b9;"></div>
<span class="t" style="font-size:15.26px;color:#101010;left:1151.88px;top:226.00px;">I</span>
<div class="a" style="left:1192.5px;top:221.5px;width:1px;height:22.5px;background:#b9b9b9;"></div>
<span class="t" style="font-size:15.26px;color:#101010;left:1230.63px;top:226.00px;">J</span>
<div class="a" style="left:1272.5px;top:221.5px;width:1px;height:22.5px;background:#b9b9b9;"></div>
<span class="t" style="font-size:15.26px;color:#101010;left:1308.37px;top:226.00px;">K</span>
<div class="a" style="left:1352.5px;top:221.5px;width:1px;height:22.5px;background:#b9b9b9;"></div>
<span class="t" style="font-size:15.26px;color:#101010;left:1389.39px;top:226.00px;">L</span>
<div class="a" style="left:1432.5px;top:221.5px;width:1px;height:22.5px;background:#b9b9b9;"></div>
<span class="t" style="font-size:15.26px;color:#101010;left:1467.64px;top:226.00px;">M</span>
<div class="a" style="left:1512.5px;top:221.5px;width:1px;height:22.5px;background:#b9b9b9;"></div>
<span class="t" style="font-size:15.26px;color:#101010;left:1548.49px;top:226.00px;">N</span>
<div class="a" style="left:1592.5px;top:221.5px;width:1px;height:22.5px;background:#b9b9b9;"></div>
<span class="t" style="font-size:15.26px;color:#101010;left:1628.07px;top:226.00px;">O</span>
<div class="a" style="left:1672.5px;top:221.5px;width:1px;height:22.5px;background:#b9b9b9;"></div>
<span class="t" style="font-size:15.26px;color:#101010;left:1708.69px;top:226.00px;">P</span>
<div class="a" style="left:1752.5px;top:221.5px;width:1px;height:22.5px;background:#b9b9b9;"></div>
<span class="t" style="font-size:15.26px;color:#101010;left:1788.07px;top:226.00px;">Q</span>
<div class="a" style="left:1832.5px;top:221.5px;width:1px;height:22.5px;background:#b9b9b9;"></div>
<span class="t" style="font-size:15.26px;color:#101010;left:1868.22px;top:226.00px;">R</span>
<span class="t" style="font-size:15.7px;color:#101010;left:13.42px;top:250.01px;">1</span>
<div class="a" style="left:1px;top:268px;width:33.5px;height:1px;background:#aeaeae;"></div>
<span class="t" style="font-size:15.7px;color:#101010;left:13.63px;top:274.01px;">2</span>
<div class="a" style="left:1px;top:292px;width:33.5px;height:1px;background:#aeaeae;"></div>
<span class="t" style="font-size:15.7px;color:#101010;left:13.68px;top:298.01px;">3</span>
<div class="a" style="left:1px;top:316px;width:33.5px;height:1px;background:#aeaeae;"></div>
<span class="t" style="font-size:15.7px;color:#101010;left:13.68px;top:322.01px;">4</span>
<div class="a" style="left:1px;top:340px;width:33.5px;height:1px;background:#aeaeae;"></div>
<span class="t" style="font-size:15.7px;color:#101010;left:13.65px;top:346.01px;">5</span>
<div class="a" style="left:1px;top:364px;width:33.5px;height:1px;background:#aeaeae;"></div>
<span class="t" style="font-size:15.7px;color:#101010;left:13.58px;top:370.01px;">6</span>
<div class="a" style="left:1px;top:388px;width:33.5px;height:1px;background:#aeaeae;"></div>
<span class="t" style="font-size:15.7px;color:#101010;left:13.63px;top:394.01px;">7</span>
<div class="a" style="left:1px;top:412px;width:33.5px;height:1px;background:#aeaeae;"></div>
<span class="t" style="font-size:15.7px;color:#101010;left:13.63px;top:418.01px;">8</span>
<div class="a" style="left:1px;top:436px;width:33.5px;height:1px;background:#aeaeae;"></div>
<span class="t" style="font-size:15.7px;color:#101010;left:13.64px;top:442.01px;">9</span>
<div class="a" style="left:1px;top:460px;width:33.5px;height:1px;background:#aeaeae;"></div>
<span class="t" style="font-size:15.7px;color:#101010;left:8.98px;top:466.01px;">10</span>
<div class="a" style="left:1px;top:484px;width:33.5px;height:1px;background:#aeaeae;"></div>
<span class="t" style="font-size:15.7px;color:#101010;left:9.64px;top:490.01px;">11</span>
<div class="a" style="left:1px;top:508px;width:33.5px;height:1px;background:#aeaeae;"></div>
<span class="t" style="font-size:15.7px;color:#101010;left:9.07px;top:514.01px;">12</span>
<div class="a" style="left:1px;top:532px;width:33.5px;height:1px;background:#aeaeae;"></div>
<span class="t" style="font-size:15.7px;color:#101010;left:9.02px;top:538.01px;">13</span>
<div class="a" style="left:1px;top:556px;width:33.5px;height:1px;background:#aeaeae;"></div>
<span class="t" style="font-size:15.7px;color:#101010;left:8.91px;top:562.01px;">14</span>
<div class="a" style="left:1px;top:580px;width:33.5px;height:1px;background:#aeaeae;"></div>
<span class="t" style="font-size:15.7px;color:#101010;left:9.01px;top:586.01px;">15</span>
<div class="a" style="left:1px;top:604px;width:33.5px;height:1px;background:#aeaeae;"></div>
<span class="t" style="font-size:15.7px;color:#101010;left:9.02px;top:610.01px;">16</span>
<div class="a" style="left:1px;top:628px;width:33.5px;height:1px;background:#aeaeae;"></div>
<span class="t" style="font-size:15.7px;color:#101010;left:9.07px;top:634.01px;">17</span>
<div class="a" style="left:1px;top:652px;width:33.5px;height:1px;background:#aeaeae;"></div>
<span class="t" style="font-size:15.7px;color:#101010;left:9.02px;top:658.01px;">18</span>
<div class="a" style="left:1px;top:676px;width:33.5px;height:1px;background:#aeaeae;"></div>
<span class="t" style="font-size:15.7px;color:#101010;left:9.05px;top:682.01px;">19</span>
<div class="a" style="left:1px;top:700px;width:33.5px;height:1px;background:#aeaeae;"></div>
<span class="t" style="font-size:15.7px;color:#101010;left:9.19px;top:706.01px;">20</span>
<div class="a" style="left:1px;top:724px;width:33.5px;height:1px;background:#aeaeae;"></div>
<span class="t" style="font-size:15.7px;color:#101010;left:9.26px;top:730.01px;">21</span>
<div class="a" style="left:1px;top:748px;width:33.5px;height:1px;background:#aeaeae;"></div>
<span class="t" style="font-size:15.7px;color:#101010;left:9.27px;top:754.01px;">22</span>
<div class="a" style="left:1px;top:772px;width:33.5px;height:1px;background:#aeaeae;"></div>
<span class="t" style="font-size:15.7px;color:#101010;left:9.22px;top:778.01px;">23</span>
<div class="a" style="left:1px;top:796px;width:33.5px;height:1px;background:#aeaeae;"></div>
<span class="t" style="font-size:15.7px;color:#101010;left:9.11px;top:802.01px;">24</span>
<div class="a" style="left:1px;top:820px;width:33.5px;height:1px;background:#aeaeae;"></div>
<span class="t" style="font-size:15.7px;color:#101010;left:9.21px;top:826.01px;">25</span>
<div class="a" style="left:1px;top:844px;width:33.5px;height:1px;background:#aeaeae;"></div>
<span class="t" style="font-size:15.7px;color:#101010;left:9.22px;top:850.01px;">26</span>
<div class="a" style="left:1px;top:868px;width:33.5px;height:1px;background:#aeaeae;"></div>
<span class="t" style="font-size:15.7px;color:#101010;left:9.27px;top:874.01px;">27</span>
<div class="a" style="left:1px;top:892px;width:33.5px;height:1px;background:#aeaeae;"></div>
<span class="t" style="font-size:15.7px;color:#101010;left:9.22px;top:898.01px;">28</span>
<div class="a" style="left:1px;top:916px;width:33.5px;height:1px;background:#aeaeae;"></div>
<span class="t" style="font-size:15.7px;color:#101010;left:9.25px;top:922.01px;">29</span>
<div class="a" style="left:1px;top:940px;width:33.5px;height:1px;background:#aeaeae;"></div>
<span class="t" style="font-size:15.7px;color:#101010;left:9.28px;top:946.01px;">30</span>
<div class="a" style="left:1px;top:964px;width:33.5px;height:1px;background:#aeaeae;"></div>
<div class="a" style="left:34px;top:245px;width:1px;height:707px;background:#b0b0b0;"></div>
<div class="a" style="left:80px;top:269px;width:953px;height:23px;background:#e8e8e8;"></div>
<div class="a" style="left:80px;top:293px;width:953px;height:167px;background:#fafafa;"></div>
<div class="a" style="left:80px;top:461px;width:953px;height:23px;background:#e8e8e8;"></div>
<div class="a" style="left:79px;top:268px;width:955px;height:1px;background:#111;"></div>
<div class="a" style="left:79px;top:292px;width:955px;height:1px;background:#111;"></div>
<div class="a" style="left:79px;top:460px;width:955px;height:1px;background:#111;"></div>
<div class="a" style="left:79px;top:484px;width:955px;height:1px;background:#111;"></div>
<div class="a" style="left:79px;top:268px;width:1px;height:690px;background:#111;"></div>
<div class="a" style="left:1033px;top:268px;width:1px;height:690px;background:#111;"></div>
<span class="t" style="font-size:16.57px;color:#000;font-weight:700;left:83.09px;top:274.00px;">Maßnahmen- und Vergabedaten</span>
<span class="t" style="font-size:16.57px;color:#000;transform:scaleX(1.0179);left:128.40px;top:298.00px;">Maßnahmennumer:</span>
<span class="t" style="font-size:16.57px;color:#000;transform:scaleX(1.0306);left:398.20px;top:298.00px;">01</span>
<span class="t" style="font-size:16.57px;color:#000;transform:scaleX(0.9888);left:128.40px;top:322.00px;">Bezeichnung der Maßnahme:</span>
<span class="t" style="font-size:16.57px;color:#000;transform:scaleX(0.9819);left:398.20px;top:322.00px;">Selenium</span>
<span class="t" style="font-size:16.57px;color:#000;left:128.40px;top:346.00px;">Vergbenummer:</span>
<span class="t" style="font-size:16.57px;color:#000;transform:scaleX(0.9867);left:398.20px;top:346.00px;">Testvergabe_1630493260</span>
<span class="t" style="font-size:16.57px;color:#000;transform:scaleX(0.9702);left:128.40px;top:370.00px;">Bezeichnung der Leistung:</span>
<span class="t" style="font-size:16.57px;color:#000;transform:scaleX(1.0283);left:128.40px;top:394.00px;">Öffnungstermin:</span>
<span class="t" style="font-size:16.57px;color:#000;transform:scaleX(0.9919);left:398.20px;top:394.00px;">01.09.2021, 15:47</span>
<span class="t" style="font-size:16.57px;color:#000;transform:scaleX(1.0146);left:128.40px;top:418.00px;">Schätzwert:</span>
<span class="t" style="font-size:16.57px;color:#000;transform:scaleX(0.9781);left:398.20px;top:370.00px;">Dies ist eine Testausschreibung. Bitte weder bewerben, noch Angebote hochladen. Es besteht kein</span>
<div class="a" style="left:1034px;top:365px;width:200px;height:24px;background:#fff;"></div>
<span class="t" style="font-size:16.57px;color:#000;font-weight:700;transform:scaleX(0.9256);left:83.17px;top:466.00px;">Liste der Firmen</span>
<span class="t" style="font-size:16.57px;color:#000;font-weight:700;transform:scaleX(0.9731);left:844.84px;top:466.00px;">Stand: 13.10.2021, 08:47</span>
<span class="t" style="font-size:16.57px;color:#000;font-weight:700;transform:scaleX(1.1278);left:110.82px;top:490.00px;">1</span>
<span class="t" style="font-size:16.57px;color:#000;font-weight:700;transform:scaleX(0.9380);left:127.70px;top:490.00px;">RIB Test - Selenium 001</span>
<span class="t" style="font-size:16.57px;color:#000;transform:scaleX(0.9964);left:732.96px;top:490.00px;">hat Angebot hochgeladen</span>
<svg class="a" style="left:610.8px;top:485px;" width="8.5" height="8" viewBox="0 0 8.5 8"><path d="M0 0h8.500v8z" fill="#f00"/></svg>
<span class="t" style="font-size:16.57px;color:#000;font-weight:700;transform:scaleX(1.0218);left:97.65px;top:514.00px;">[D]</span>
<span class="t" style="font-size:16.57px;color:#000;transform:scaleX(1.0506);left:128.40px;top:514.00px;">Martina</span>
<span class="t" style="font-size:16.57px;color:#000;transform:scaleX(0.9947);left:128.40px;top:538.00px;">Saturnmond 11, 44791 Methone</span>
<span class="t" style="font-size:16.57px;color:#000;transform:scaleX(0.9927);left:128.40px;top:562.00px;">Deutschland</span>
<span class="t" style="font-size:16.57px;color:#000;font-weight:700;transform:scaleX(1.0901);left:111.37px;top:586.00px;">2</span>
<span class="t" style="font-size:16.57px;color:#000;font-weight:700;transform:scaleX(0.9390);left:127.70px;top:586.00px;">RIB Test - Selenium 002</span>
<span class="t" style="font-size:16.57px;color:#000;transform:scaleX(0.9964);left:732.96px;top:586.00px;">hat Angebot hochgeladen</span>
<svg class="a" style="left:610.8px;top:581px;" width="8.5" height="8" viewBox="0 0 8.5 8"><path d="M0 0h8.500v8z" fill="#f00"/></svg>
<div class="a" style="left:80px;top:580.3px;width:953px;height:1.2px;background:#e1e1e1;"></div>
<span class="t" style="font-size:16.57px;color:#000;font-weight:700;transform:scaleX(1.0218);left:97.65px;top:610.00px;">[D]</span>
<span class="t" style="font-size:16.57px;color:#000;transform:scaleX(0.9752);left:128.40px;top:610.00px;">Saturnmond 5, 17449 Prometheus</span>
<span class="t" style="font-size:16.57px;color:#000;transform:scaleX(0.9927);left:128.40px;top:634.00px;">Deutschland</span>
<span class="t" style="font-size:16.57px;color:#000;font-weight:700;transform:scaleX(1.0559);left:111.60px;top:658.00px;">3</span>
<span class="t" style="font-size:16.57px;color:#000;font-weight:700;transform:scaleX(0.9387);left:127.70px;top:658.00px;">RIB Test - Selenium 003</span>
<span class="t" style="font-size:16.57px;color:#000;transform:scaleX(1.0043);left:749.92px;top:658.00px;">wurde benachrichtigt</span>
<svg class="a" style="left:610.8px;top:653px;" width="8.5" height="8" viewBox="0 0 8.5 8"><path d="M0 0h8.500v8z" fill="#f00"/></svg>
<div class="a" style="left:80px;top:652.3px;width:953px;height:1.2px;background:#e1e1e1;"></div>
<span class="t" style="font-size:16.57px;color:#000;font-weight:700;transform:scaleX(1.0218);left:97.65px;top:682.00px;">[D]</span>
<span class="t" style="font-size:16.57px;color:#000;transform:scaleX(0.9947);left:128.40px;top:682.00px;">Saturnmond 11, 44791 Methone</span>
<span class="t" style="font-size:16.57px;color:#000;transform:scaleX(0.9927);left:128.40px;top:706.00px;">Deutschland</span>
<span class="t" style="font-size:16.57px;color:#000;font-weight:700;transform:scaleX(0.9798);left:111.75px;top:730.00px;">4</span>
<span class="t" style="font-size:16.57px;color:#000;font-weight:700;transform:scaleX(0.9361);left:127.70px;top:730.00px;">RIB Test - Selenium 004</span>
<span class="t" style="font-size:16.57px;color:#000;transform:scaleX(1.0043);left:749.92px;top:730.00px;">wurde benachrichtigt</span>
<svg class="a" style="left:610.8px;top:725px;" width="8.5" height="8" viewBox="0 0 8.5 8"><path d="M0 0h8.500v8z" fill="#f00"/></svg>
<div class="a" style="left:80px;top:724.3px;width:953px;height:1.2px;background:#e1e1e1;"></div>
<span class="t" style="font-size:16.57px;color:#000;font-weight:700;transform:scaleX(1.0218);left:97.65px;top:754.00px;">[D]</span>
<span class="t" style="font-size:16.57px;color:#000;transform:scaleX(0.9824);left:128.40px;top:754.00px;">Marsmond 1, 12365 Phobos</span>
<span class="t" style="font-size:16.57px;color:#000;transform:scaleX(0.9927);left:128.40px;top:778.00px;">Deutschland</span>
<span class="t" style="font-size:16.57px;color:#000;font-weight:700;transform:scaleX(1.0548);left:111.46px;top:802.00px;">5</span>
<span class="t" style="font-size:16.57px;color:#000;font-weight:700;transform:scaleX(0.9380);left:127.70px;top:802.00px;">RIB Test - Selenium 005</span>
<span class="t" style="font-size:16.57px;color:#000;transform:scaleX(1.0043);left:749.92px;top:802.00px;">wurde benachrichtigt</span>
<svg class="a" style="left:610.8px;top:797px;" width="8.5" height="8" viewBox="0 0 8.5 8"><path d="M0 0h8.500v8z" fill="#f00"/></svg>
<div class="a" style="left:80px;top:796.3px;width:953px;height:1.2px;background:#e1e1e1;"></div>
<span class="t" style="font-size:16.57px;color:#000;font-weight:700;transform:scaleX(1.0218);left:97.65px;top:826.00px;">[D]</span>
<span class="t" style="font-size:16.57px;color:#000;transform:scaleX(0.9822);left:128.40px;top:826.00px;">Zwergplanet 123, 45451 Makemake</span>
<span class="t" style="font-size:16.57px;color:#000;transform:scaleX(0.9927);left:128.40px;top:850.00px;">Deutschland</span>
<span class="t" style="font-size:16.57px;color:#000;font-weight:700;transform:scaleX(1.0857);left:111.34px;top:874.00px;">6</span>
<span class="t" style="font-size:16.57px;color:#000;font-weight:700;transform:scaleX(0.9387);left:127.70px;top:874.00px;">RIB Test - Selenium 006</span>
<span class="t" style="font-size:16.57px;color:#000;transform:scaleX(1.0043);left:749.92px;top:874.00px;">wurde benachrichtigt</span>
<svg class="a" style="left:610.8px;top:869px;" width="8.5" height="8" viewBox="0 0 8.5 8"><path d="M0 0h8.500v8z" fill="#f00"/></svg>
<div class="a" style="left:80px;top:868.3px;width:953px;height:1.2px;background:#e1e1e1;"></div>
<span class="t" style="font-size:16.57px;color:#000;font-weight:700;transform:scaleX(1.0218);left:97.65px;top:898.00px;">[D]</span>
<span class="t" style="font-size:16.57px;color:#000;transform:scaleX(0.9890);left:128.40px;top:898.00px;">Plutomond 1, 99154 Charon</span>
<span class="t" style="font-size:16.57px;color:#000;transform:scaleX(0.9927);left:128.40px;top:922.00px;">Deutschland</span>
<span class="t" style="font-size:16.57px;color:#000;font-weight:700;transform:scaleX(1.1185);left:111.20px;top:946.00px;">7</span>
<span class="t" style="font-size:16.57px;color:#000;font-weight:700;transform:scaleX(0.9393);left:127.70px;top:946.00px;">RIB Test - Selenium 007</span>
<span class="t" style="font-size:16.57px;color:#000;transform:scaleX(1.0043);left:749.92px;top:946.00px;">wurde benachrichtigt</span>
<svg class="a" style="left:610.8px;top:941px;" width="8.5" height="8" viewBox="0 0 8.5 8"><path d="M0 0h8.500v8z" fill="#f00"/></svg>
<div class="a" style="left:80px;top:940.3px;width:953px;height:1.2px;background:#e1e1e1;"></div>
<div class="a" style="left:1894px;top:221.5px;width:25px;height:731px;background:#e6e6e6;"></div>
<div class="a" style="left:1893px;top:244px;width:1px;height:708px;background:#a2a2a2;"></div>
<div class="a" style="left:1897px;top:242px;width:19px;height:692px;background:#dadada;"></div>
<div class="a" style="left:1897px;top:242.3px;width:19px;height:488.5px;background:#fff;box-sizing:border-box;border:1px solid #ababab;"></div>
<div class="a" style="left:1897px;top:223px;width:19px;height:18.7px;background:#fff;box-sizing:border-box;border:1px solid #ababab;"></div>
<svg class="a" style="left:1902px;top:228.5px;" width="9.2" height="5.5" viewBox="0 0 9.2 5.5"><path d="M0 5.500h9.200L4.600 0z" fill="#6a6a6a"/></svg>
<div class="a" style="left:1897px;top:934.3px;width:19px;height:17.7px;background:#fff;box-sizing:border-box;border:1px solid #ababab;"></div>
<svg class="a" style="left:1902px;top:940.5px;" width="9.2" height="5.5" viewBox="0 0 9.2 5.5"><path d="M0 0h9.200L4.600 5.500z" fill="#6a6a6a"/></svg>
<div class="a" style="left:0px;top:952px;width:1920px;height:29px;background:#e6e6e6;"></div>
<div class="a" style="left:0px;top:952px;width:1894px;height:1px;background:#9c9c9c;"></div>
<svg class="a" style="left:26.5px;top:961.5px;" width="7" height="10" viewBox="0 0 7 10"><path d="M6.500 0.500v9L0.500 5z" fill="#c0c0c0"/></svg>
<svg class="a" style="left:55.5px;top:961.5px;" width="7" height="10" viewBox="0 0 7 10"><path d="M0.500 0.500v9L6.500 5z" fill="#c0c0c0"/></svg>
<div class="a" style="left:104.5px;top:952px;width:105px;height:25.5px;background:#fff;box-sizing:border-box;border-left:1px solid #c0c0c0;border-right:1px solid #c0c0c0;border-bottom:2.500px solid #217346;"></div>
<span class="t" style="font-size:16.72px;color:#217346;font-weight:700;left:115.38px;top:956.40px;">Fimenliste</span>
<svg class="a" style="left:242.5px;top:956.5px;" width="20" height="20" viewBox="0 0 20 20"><circle cx="10" cy="10" r="9" fill="none" stroke="#bdbdbd" stroke-width="1.200"/><path d="M10 5.500v9M5.500 10h9" stroke="#bdbdbd" stroke-width="1.200"/></svg>
<div class="a" style="left:1149px;top:960.2px;width:2.8px;height:2.8px;background:#a8a8a8;"></div>
<div class="a" style="left:1149px;top:965.2px;width:2.8px;height:2.8px;background:#a8a8a8;"></div>
<div class="a" style="left:1149px;top:970.2px;width:2.8px;height:2.8px;background:#a8a8a8;"></div>
<div class="a" style="left:1167px;top:957px;width:727px;height:19px;background:#d9d9d9;"></div>
<div class="a" style="left:1167px;top:957px;width:18.5px;height:19px;background:#fff;box-sizing:border-box;border:1px solid #ababab;"></div>
<svg class="a" style="left:1172.5px;top:962px;" width="6" height="9" viewBox="0 0 6 9"><path d="M5.500 0v9L0.500 4.500z" fill="#6a6a6a"/></svg>
<div class="a" style="left:1185.5px;top:957px;width:648px;height:19px;background:#fff;box-sizing:border-box;border:1px solid #ababab;"></div>
<div class="a" style="left:1875px;top:957px;width:18.5px;height:19px;background:#fff;box-sizing:border-box;border:1px solid #ababab;"></div>
<svg class="a" style="left:1882px;top:962px;" width="6" height="9" viewBox="0 0 6 9"><path d="M0.500 0v9L5.500 4.500z" fill="#6a6a6a"/></svg>
<div class="a" style="left:0px;top:981px;width:1920px;height:27px;background:#f3f2f1;"></div>
<div class="a" style="left:0px;top:981px;width:1920px;height:1px;background:#d2d0ce;"></div>
<span class="t" style="font-size:13.37px;color:#444;transform:scaleX(0.9878);left:8.62px;top:989.01px;">Bereit</span>
<svg class="a" style="left:1362px;top:986.5px;" width="19" height="17" viewBox="0 0 19 17"><path d="M8.500 11.500H1V1h15.500v6" fill="none" stroke="#555" stroke-width="1.300"/><circle cx="12.300" cy="11.500" r="2.600" fill="none" stroke="#444" stroke-width="1.300"/><path d="M12.300 6.800v2M12.300 14.200v2M7.800 11.500h2M14.800 11.500h2M9 8.300l1.500 1.400M14.200 13.300l1.400 1.400M9 14.700l1.500-1.400M14.200 9.700l1.400-1.400" stroke="#444" stroke-width="1.300"/></svg>
<span class="t" style="font-size:13.37px;color:#444;transform:scaleX(0.9594);left:1383.57px;top:989.01px;">Anzeigeeinstellungen</span>
<div class="a" style="left:1529px;top:981px;width:50px;height:26px;background:#cdcdcd;"></div>
<svg class="a" style="left:1545px;top:986.5px;" width="17" height="16" viewBox="0 0 17 16"><rect x=".8" y=".8" width="15.400" height="14.400" fill="none" stroke="#555" stroke-width="1.500"/><path d="M6 .8v14.400M11 .8v14.400M.8 5.600h15.400M.8 10.400h15.400" stroke="#555" stroke-width="1.400"/></svg>
<svg class="a" style="left:1595px;top:986.5px;" width="18" height="16" viewBox="0 0 18 16"><rect x=".8" y=".8" width="16.400" height="14.400" fill="none" stroke="#555" stroke-width="1.500"/><rect x="4.300" y="3.800" width="9.400" height="8.400" fill="none" stroke="#555" stroke-width="1.200"/><path d="M6.300 6.500h5.400M6.300 9.500h5.400" stroke="#555" stroke-width="1"/></svg>
<svg class="a" style="left:1645px;top:986.5px;" width="18" height="16" viewBox="0 0 18 16"><path d="M.8.800h16.400v14.400H.8z" fill="none" stroke="#c6c4c2" stroke-width="1.500"/><path d="M.8 8.500h10.500V.8M5.500 .8v7.700" fill="none" stroke="#c6c4c2" stroke-width="1.300"/></svg>
<div class="a" style="left:1686px;top:994px;width:9.5px;height:1.3px;background:#555;"></div>
<div class="a" style="left:1702px;top:994.3px;width:125px;height:1px;background:#6e6e6e;"></div>
<div class="a" style="left:1762.5px;top:988px;width:5.6px;height:13.6px;background:#747474;"></div>
<div class="a" style="left:1833px;top:994px;width:9.5px;height:1.3px;background:#555;"></div>
<div class="a" style="left:1837.1px;top:990px;width:1.3px;height:9.5px;background:#555;"></div>
<span class="t" style="font-size:13.37px;color:#444;transform:scaleX(0.9424);left:1858.64px;top:989.01px;">100 %</span>
<div class="a" style="left:1918px;top:44px;width:1px;height:964px;background:#fff;"></div>
<div class="a" style="left:1px;top:1007px;width:1918px;height:1px;background:#fff;"></div>
<div class="a" style="left:0px;top:0px;width:1px;height:1009px;background:#217346;"></div>
<div class="a" style="left:1919px;top:0px;width:1px;height:1009px;background:#217346;"></div>
<div class="a" style="left:0px;top:1008px;width:1920px;height:1px;background:#217346;"></div>
</div>
<div class="a" style="left:0px;top:0px;width:2541px;height:1px;background:#474747;"></div>
<div class="a" style="left:0px;top:0px;width:1px;height:1250px;background:#474747;"></div>
<div class="a" style="left:2540px;top:0px;width:1px;height:1250px;background:#474747;"></div>
<div class="a" style="left:0px;top:1249px;width:2541px;height:1px;background:#474747;"></div>
<svg class="a" style="left:0;top:0;" width="2541" height="1250" viewBox="0 0 2541 1250"><defs><filter id="ash" x="-5%" y="-20%" width="110%" height="150%"><feGaussianBlur in="SourceAlpha" stdDeviation="2.1"/><feOffset dx="2" dy="3"/><feComponentTransfer><feFuncA type="linear" slope="0.55"/></feComponentTransfer><feMerge><feMergeNode/><feMergeNode in="SourceGraphic"/></feMerge></filter></defs><path d="M1401.4 632.5 L1427.7 613.5 L1425.3 624.0 L2279.2 482.8 A5.2 5.2 0 0 1 2280.8 493.0 L1426.8 632.9 L1432.9 642.5Z" fill="#fa4145" filter="url(#ash)"/></svg>
</div>
</body></html>
